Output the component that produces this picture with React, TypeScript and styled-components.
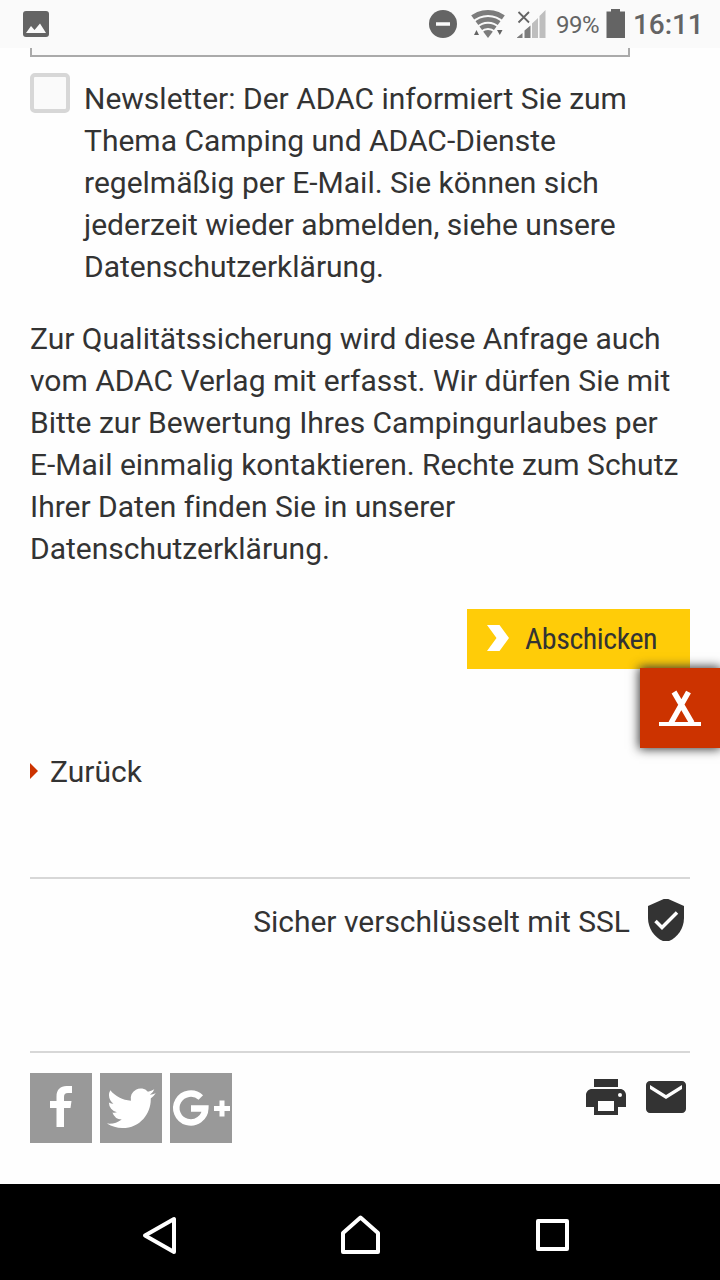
import React from "react";
import styled, { createGlobalStyle } from "styled-components";

const GlobalStyle = createGlobalStyle`
  * { box-sizing: border-box; }
  body { margin: 0; background: #fefefe; }
`;

const Screen = styled.div`
  width: 720px;
  height: 1280px;
  display: flex;
  flex-direction: column;
  overflow: hidden;
  background: #fefefe;
  color: #333;
  font: 30px/42px Roboto, "Liberation Sans", sans-serif;
  font-variant-ligatures: none;
`;

const StatusBar = styled.header`
  height: 48px;
  flex: none;
  display: flex;
  align-items: center;
  justify-content: space-between;
  background: #fafafa;
  color: #646464;
`;

const StatusIcons = styled.svg`
  display: block;
  flex: none;
`;

const StatusRight = styled.div`
  display: flex;
  align-items: center;
  width: 300px;
  height: 48px;
`;

const Battery = styled.span`
  width: 49px;
  font-size: 24px;
  letter-spacing: -0.5px;
  white-space: nowrap;
  padding-top: 1px;
`;

const Clock = styled.span`
  font-size: 28px;
  font-weight: 500;
  letter-spacing: -0.1px;
  white-space: nowrap;
  padding-top: 2px;
`;

const Content = styled.main`
  flex: 1;
  display: flex;
  flex-direction: column;
  padding: 0 30px;
`;

const FieldEnd = styled.div`
  width: 600px;
  height: 9px;
  flex: none;
  border: 2px solid #aaa;
  border-top: 0;
  background: #fafafa;
`;

const Newsletter = styled.label`
  display: flex;
  gap: 14px;
  margin-top: 16px;
`;

const Checkbox = styled.span`
  width: 40px;
  height: 40px;
  flex: none;
  border: 4px solid #d7d7d7;
  border-radius: 5px;
  background: #fafafa;
`;

const Copy = styled.p<{ $top: number }>`
  margin: ${(p) => p.$top}px 0 0;
  white-space: nowrap;
`;

const Actions = styled.div`
  display: flex;
  justify-content: flex-end;
  margin-top: 39px;
`;

const Submit = styled.button`
  width: 223px;
  height: 60px;
  display: flex;
  align-items: center;
  border: 0;
  padding: 0 0 0 20px;
  gap: 16px;
  background: #ffcc08;
  color: #333;
  font: 30px/60px "Roboto Condensed", Roboto, sans-serif;
  letter-spacing: -0.45px;

  svg { margin-bottom: 2px; }
`;

const CampingTab = styled.div`
  position: absolute;
  left: 640px;
  top: 668px;
  width: 80px;
  height: 80px;
  background: #cc3300;
  box-shadow: 0 0 10px 1px #333;
`;

const Back = styled.a`
  display: flex;
  align-items: center;
  gap: 12px;
  height: 42px;
  margin-top: 82px;

  svg { margin-bottom: 2px; }
`;

const Secure = styled.div`
  display: flex;
  justify-content: flex-end;
  gap: 12px;
  height: 86px;
  margin-top: 84px;
  padding-top: 22px;
  border-top: 2px solid #d7d7d7;

  svg { margin-top: -2px; }
`;

const Footer = styled.footer`
  display: flex;
  justify-content: space-between;
  align-items: flex-start;
  margin-top: 88px;
  padding-top: 20px;
  border-top: 2px solid #d7d7d7;
`;

const Group = styled.div<{ $gap: number }>`
  display: flex;
  gap: ${(p) => p.$gap}px;
`;

const Social = styled.a`
  width: 62px;
  height: 70px;
  background: #999;
  svg { display: block; }
`;

const NavBar = styled.nav`
  height: 96px;
  flex: none;
  background: #000;
  display: flex;
  align-items: center;
  justify-content: space-between;
  padding: 4px 136px 0 128px;
`;

const NavIcon = ({ d }: { d: string }) => (
  <svg width="64" height="64" viewBox="0 0 64 64" fill="none" stroke="#fff" strokeWidth="4" strokeLinejoin="round">
    <path d={d} />
  </svg>
);

export default function App() {
  return (
    <Screen>
      <GlobalStyle />
      <StatusBar>
        <StatusIcons width="60" height="48" viewBox="0 0 60 48">
          <rect x="23" y="11" width="26" height="26" rx="3" fill="#646464" />
          <path d="M26 33 31 26 34.5 30 40 23.5 46 33Z" fill="#fafafa" />
        </StatusIcons>
        <StatusRight>
          <StatusIcons width="136" height="48" viewBox="420 0 136 48">
            <circle cx="443" cy="24" r="14" fill="#646464" />
            <path d="M436 24h14" stroke="#fafafa" strokeWidth="3.5" />
            <clipPath id="wifi-fan">
              <path d="M488 38 467.500 10.500V6h41v4.500Z" />
            </clipPath>
            <g clipPath="url(#wifi-fan)" fill="none" stroke="#7c7c7c">
              <circle cx="488" cy="38" r="25.500" strokeWidth="5" />
              <circle cx="488" cy="38" r="18.600" strokeWidth="4.600" />
              <circle cx="488" cy="38" r="12.200" strokeWidth="4.200" />
              <circle cx="488" cy="38" r="4" strokeWidth="8" />
            </g>
            <path d="m474 35 2.500-5 2.500 5ZM497 30h5.500l-2.700 5Z" fill="#646464" />
            <path d="m518.500 12 10.500 10.500m0-10.500L518.500 22.500" stroke="#646464" strokeWidth="1.800" />
            <path d="M517 38v-.500l5.500-4.500v5ZM524.500 38v-7.500l6-5V38Z" fill="#7c7c7c" />
            <path d="M532 38V23.500l6-5.500v20ZM539.500 38V16l6-6v28Z" fill="#bebebe" />
          </StatusIcons>
          <Battery>99%</Battery>
          <StatusIcons width="28" height="48" viewBox="605 0 28 48">
            <path d="M611 9h9v2.500h5V38h-18.500V11.500H611Z" fill="#646464" />
          </StatusIcons>
          <Clock>16:11</Clock>
        </StatusRight>
      </StatusBar>

      <Content>
        <FieldEnd />
        <Newsletter>
          <Checkbox />
          <Copy $top={5}>
            Newsletter: Der ADAC informiert Sie zum<br />
            Thema Camping und ADAC-Dienste<br />
            regelmäßig per E-Mail. Sie können sich<br />
            jederzeit wieder abmelden, siehe unsere<br />
            Datenschutzerklärung.
          </Copy>
        </Newsletter>
        <Copy $top={30}>
          Zur Qualitätssicherung wird diese Anfrage auch<br />
          vom ADAC Verlag mit erfasst. Wir dürfen Sie mit<br />
          Bitte zur Bewertung Ihres Campingurlaubes per<br />
          E-Mail einmalig kontaktieren. Rechte zum Schutz<br />
          Ihrer Daten finden Sie in unserer<br />
          Datenschutzerklärung.
        </Copy>
        <Actions>
          <Submit>
            <svg width="22" height="26" viewBox="0 0 22 26">
              <path d="M0 0h12.500L22 13l-9.500 13H0l9.500-13Z" fill="#fff" />
            </svg>
            Abschicken
          </Submit>
        </Actions>
        <Back>
          <svg width="8" height="16" viewBox="0 0 8 16">
            <path d="m0 0 8 8-8 8Z" fill="#cc3300" />
          </svg>
          Zurück
        </Back>
        <Secure>
          Sicher verschlüsselt mit SSL
          <svg width="48" height="42" viewBox="0 3 48 42">
            <path fill="#333" d="M24 2 6 10v12c0 11.100 7.680 21.480 18 24 10.320-2.520 18-12.900 18-24V10Z" />
            <path d="m13.500 25 6.500 6.500L35 16.500" fill="none" stroke="#fefefe" strokeWidth="3.500" />
          </svg>
        </Secure>
        <Footer>
          <Group $gap={8}>
            <Social>
              <svg width="62" height="70" viewBox="0 0 62 70">
                <path fill="#fff" d="M26.500 54V35H20v-7h6.500v-4.500c0-7 4-10.500 10-10.500h5.500v7h-4c-3 0-4 1.200-4 4v4h7.500l-1 7H34v19Z" />
              </svg>
            </Social>
            <Social>
              <svg width="62" height="70" viewBox="0 0 62 70">
                <path transform="translate(7 10.900) scale(2.030)" fill="#fff" d="M23.953 4.570a10 10 0 0 1-2.825.775 4.958 4.958 0 0 0 2.163-2.723 9.900 9.900 0 0 1-3.127 1.184 4.920 4.920 0 0 0-8.384 4.482C7.690 8.095 4.067 6.130 1.640 3.162a4.822 4.822 0 0 0-.666 2.475c0 1.710.870 3.213 2.188 4.096a4.904 4.904 0 0 1-2.228-.616v.060a4.923 4.923 0 0 0 3.946 4.827 4.996 4.996 0 0 1-2.212.085 4.936 4.936 0 0 0 4.604 3.417 9.867 9.867 0 0 1-6.102 2.105c-.390 0-.779-.023-1.170-.067a13.995 13.995 0 0 0 7.557 2.209c9.053 0 13.998-7.496 13.998-13.985 0-.210 0-.420-.015-.630A9.935 9.935 0 0 0 24 4.590Z" />
              </svg>
            </Social>
            <Social>
              <svg width="62" height="70" viewBox="0 0 62 70">
                <path d="M30.800 24.500A14.500 14.500 0 1 0 35.300 35.500H21" fill="none" stroke="#fff" strokeWidth="6.500" />
                <path d="M44 35.500h16M52 27.500v16" stroke="#fff" strokeWidth="5" />
              </svg>
            </Social>
          </Group>
          <Group $gap={12}>
            <svg width="48" height="48" viewBox="0 0 24 24" fill="#333">
              <path d="M19 8H5c-1.660 0-3 1.340-3 3v6h4v4h12v-4h4v-6c0-1.660-1.340-3-3-3Zm-3 11H8v-5h8v5Zm3-7a1 1 0 1 1 0-2 1 1 0 0 1 0 2ZM18 3H6v4h12V3Z" />
            </svg>
            <svg width="48" height="48" viewBox="0 0 24 24" fill="#333">
              <path d="M20 4H4c-1.100 0-2 .900-2 2v12c0 1.100.900 2 2 2h16c1.100 0 2-.900 2-2V6c0-1.100-.900-2-2-2Zm0 4-8 5-8-5V6l8 5 8-5v2Z" />
            </svg>
          </Group>
        </Footer>
      </Content>

      <NavBar>
        <NavIcon d="M17 33.500 46 17V50Z" />
        <NavIcon d="M19 31 36.500 15.500 54 31v19H19Z" />
        <NavIcon d="M18 19h29v28H18Z" />
      </NavBar>

      <CampingTab>
        <svg width="80" height="80" viewBox="0 0 80 80" fill="none" stroke="#fff">
          <path d="M19 56h42" strokeWidth="4" />
          <path d="M34 24 52 55M48.500 24 31 55" strokeWidth="5.500" />
        </svg>
      </CampingTab>
    </Screen>
  );
}
